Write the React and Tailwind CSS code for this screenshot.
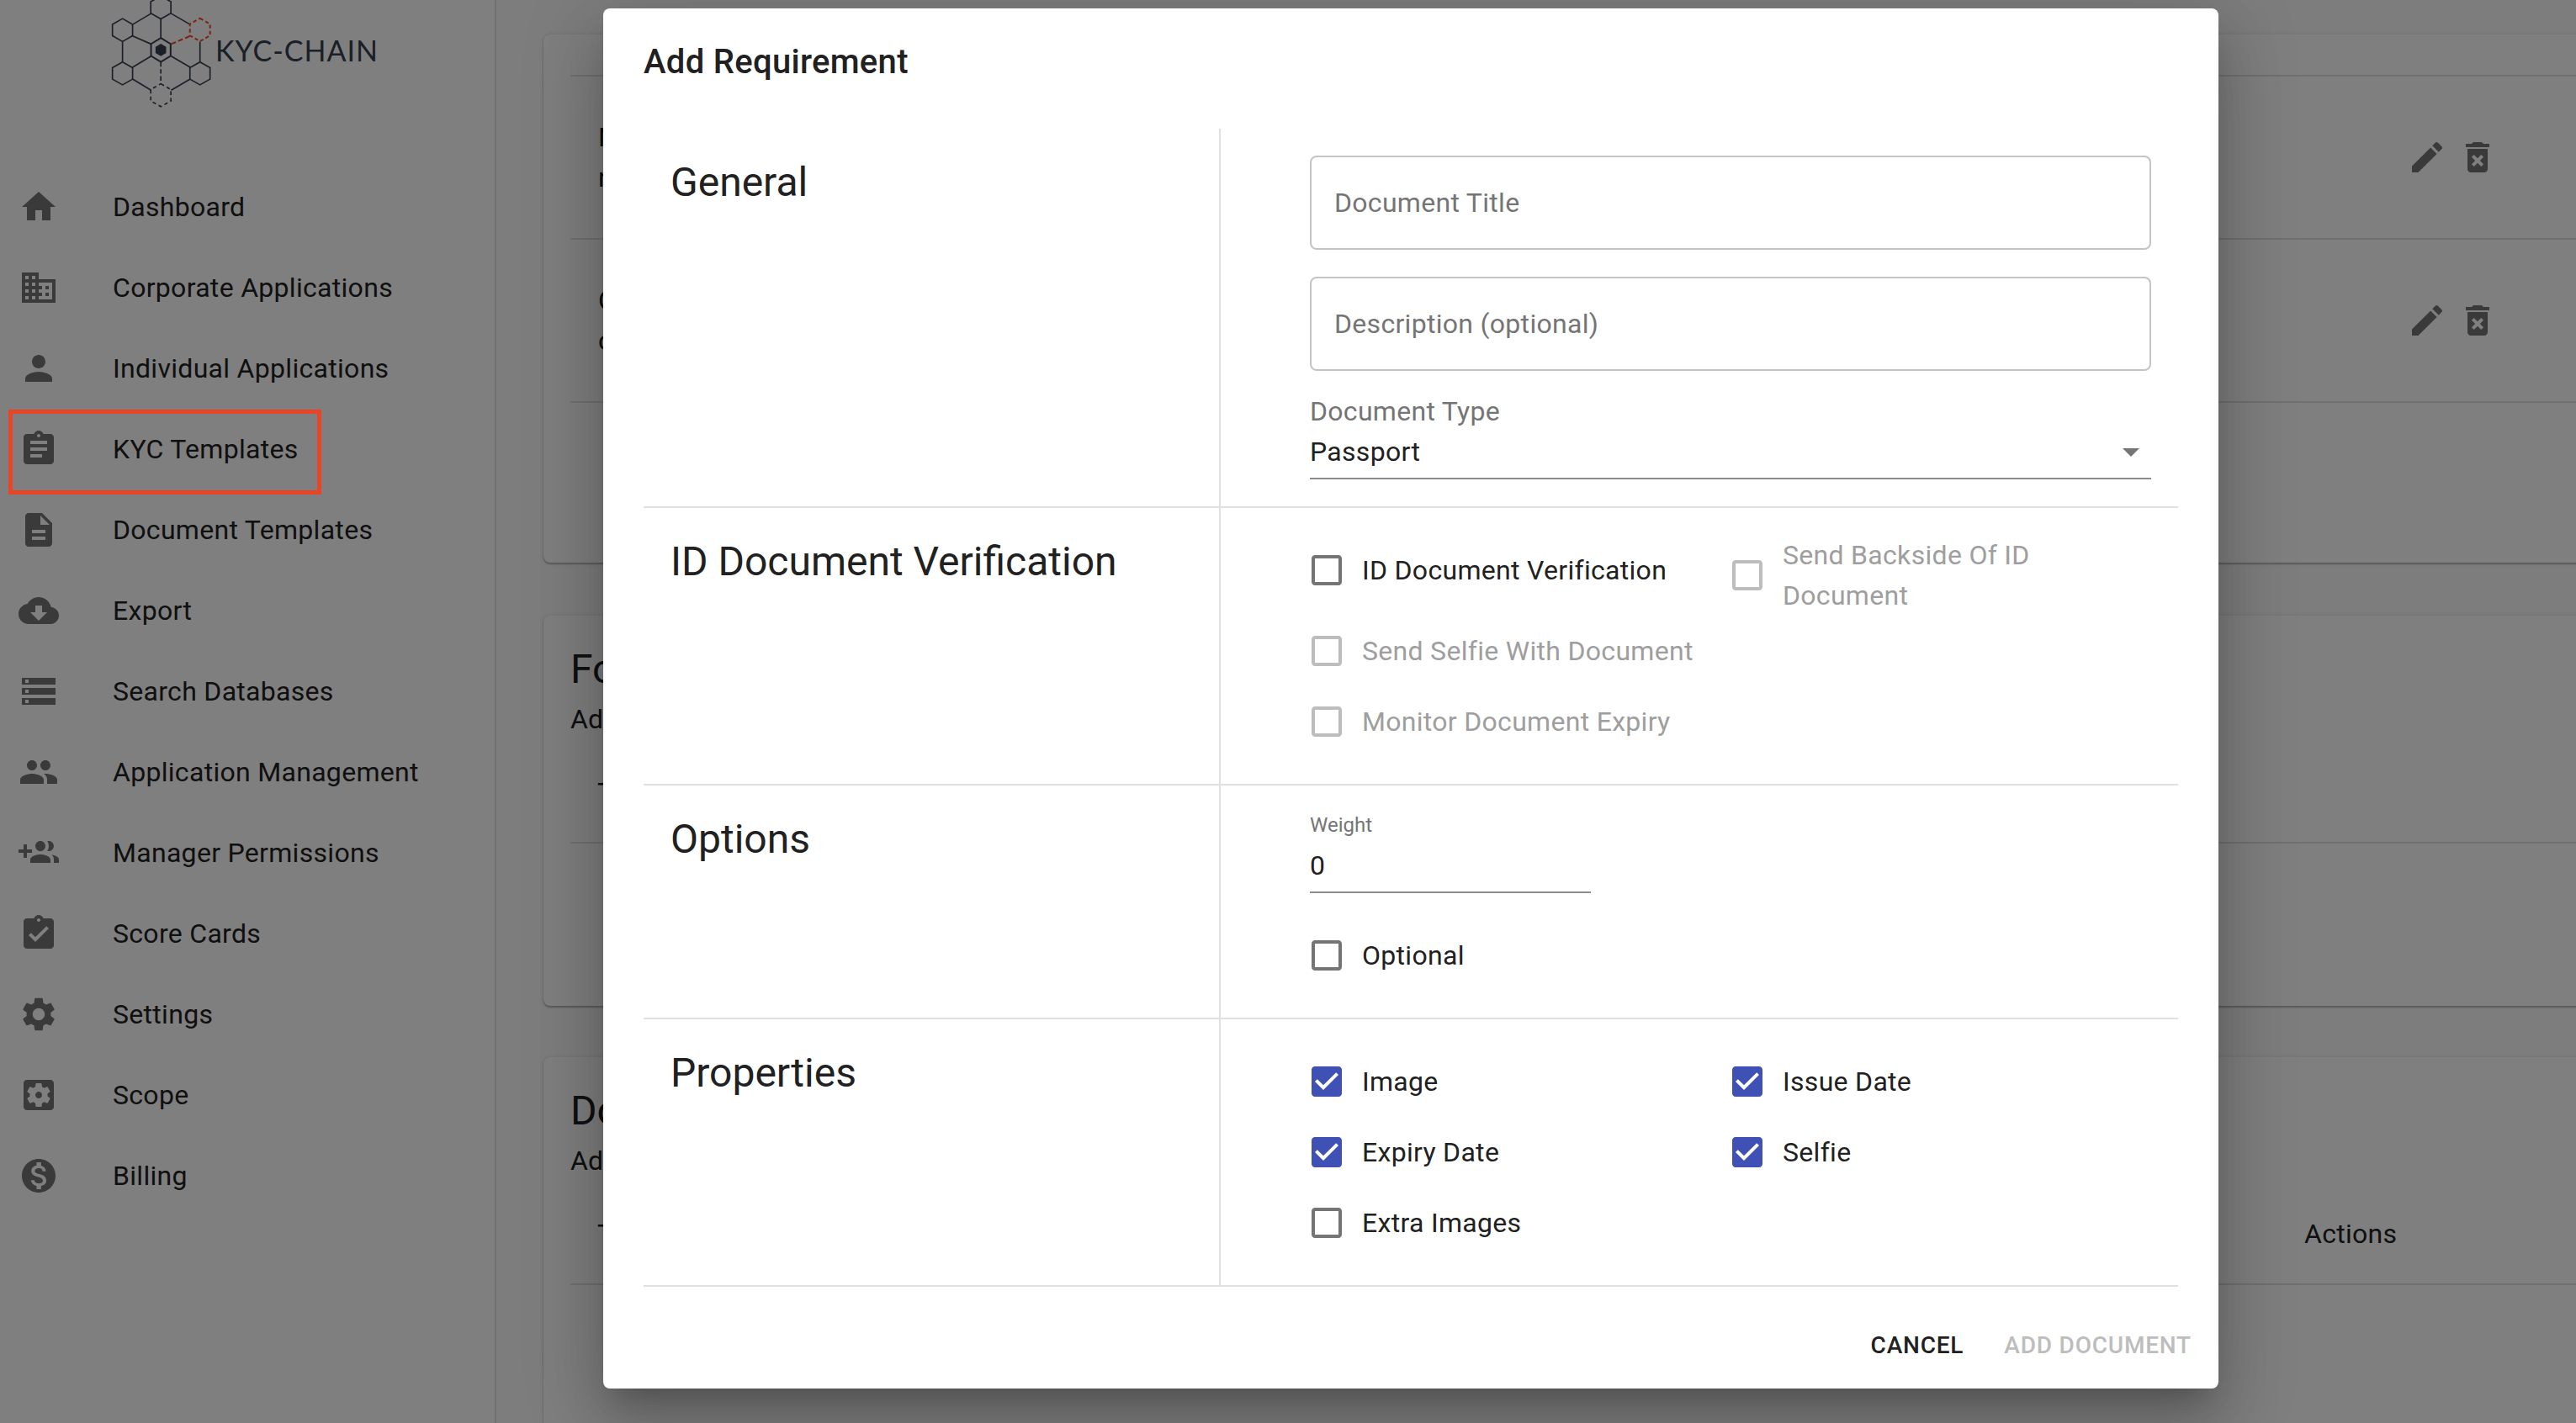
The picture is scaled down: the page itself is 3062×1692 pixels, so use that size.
import React from 'react'

const ICONS = {
  home: 'M10 20v-6h4v6h5v-8h3L12 3 2 12h3v8z',
  domain: 'M12 7V3H2v18h20V7H12zM6 19H4v-2h2v2zm0-4H4v-2h2v2zm0-4H4V9h2v2zm0-4H4V5h2v2zm4 12H8v-2h2v2zm0-4H8v-2h2v2zm0-4H8V9h2v2zm0-4H8V5h2v2zm10 12h-8v-2h2v-2h-2v-2h2v-2h-2V9h8v10zm-2-8h-2v2h2v-2zm0 4h-2v2h2v-2z',
  person: 'M12 12c2.21 0 4-1.79 4-4s-1.79-4-4-4-4 1.79-4 4 1.79 4 4 4zm0 2c-2.67 0-8 1.34-8 4v2h16v-2c0-2.66-5.33-4-8-4z',
  assignment: 'M19 3h-4.18C14.4 1.84 13.3 1 12 1c-1.3 0-2.4.84-2.82 2H5c-1.1 0-2 .9-2 2v14c0 1.1.9 2 2 2h14c1.1 0 2-.9 2-2V5c0-1.1-.9-2-2-2zm-7 0c.55 0 1 .45 1 1s-.45 1-1 1-1-.45-1-1 .45-1 1-1zm2 14H7v-2h7v2zm3-4H7v-2h10v2zm0-4H7V7h10v2z',
  description: 'M14 2H6c-1.1 0-1.99.9-1.99 2L4 20c0 1.1.89 2 1.99 2H18c1.1 0 2-.9 2-2V8l-6-6zm2 16H8v-2h8v2zm0-4H8v-2h8v2zm-3-5V3.5L18.5 9H13z',
  cloud: 'M19.35 10.04C18.67 6.59 15.64 4 12 4 9.11 4 6.6 5.64 5.35 8.04 2.34 8.36 0 10.91 0 14c0 3.31 2.69 6 6 6h13c2.76 0 5-2.24 5-5 0-2.64-2.05-4.78-4.65-4.96zM17 13l-5 5-5-5h3V9h4v4h3z',
  storage: 'M2 20h20v-4H2v4zm2-3h2v2H4v-2zM2 4v4h20V4H2zm4 3H4V5h2v2zm-4 7h20v-4H2v4zm2-3h2v2H4v-2z',
  people: 'M16 11c1.66 0 2.99-1.34 2.99-3S17.66 5 16 5c-1.66 0-3 1.34-3 3s1.34 3 3 3zm-8 0c1.66 0 2.99-1.34 2.99-3S9.66 5 8 5C6.34 5 5 6.34 5 8s1.34 3 3 3zm0 2c-2.33 0-7 1.17-7 3.5V19h14v-2.5c0-2.33-4.67-3.5-7-3.5zm8 0c-.29 0-.62.02-.97.05 1.16.84 1.97 1.97 1.97 3.45V19h6v-2.5c0-2.33-4.67-3.5-7-3.5z',
  groupAdd: 'M8 10H5V7H3v3H0v2h3v3h2v-3h3v-2zm10 1c1.66 0 2.99-1.34 2.99-3S19.66 5 18 5c-.32 0-.63.05-.91.14.57.81.9 1.79.9 2.86s-.34 2.04-.9 2.86c.28.09.59.14.91.14zm-5 0c1.66 0 2.99-1.34 2.99-3S14.66 5 13 5c-1.66 0-3 1.34-3 3s1.34 3 3 3zm6.62 2.16c.83.73 1.38 1.66 1.38 2.84v2h3v-2c0-1.54-2.37-2.49-4.38-2.84zM13 13c-2 0-6 1-6 3v2h12v-2c0-2-4-3-6-3z',
  turnedIn: 'M19 3h-4.18C14.4 1.84 13.3 1 12 1c-1.3 0-2.4.84-2.82 2H5c-1.1 0-2 .9-2 2v14c0 1.1.9 2 2 2h14c1.1 0 2-.9 2-2V5c0-1.1-.9-2-2-2zm-7 0c.55 0 1 .45 1 1s-.45 1-1 1-1-.45-1-1 .45-1 1-1zm-2 14l-4-4 1.41-1.41L10 14.17l6.59-6.59L18 9l-8 8z',
  settings: 'M19.14 12.94c.04-.3.06-.61.06-.94 0-.32-.02-.64-.07-.94l2.03-1.58c.18-.14.23-.41.12-.61l-1.92-3.32c-.12-.22-.37-.29-.59-.22l-2.39.96c-.5-.38-1.03-.7-1.62-.94l-.36-2.54c-.04-.24-.24-.41-.48-.41h-3.84c-.24 0-.43.17-.47.41l-.36 2.54c-.59.24-1.13.57-1.62.94l-2.39-.96c-.22-.08-.47 0-.59.22L2.74 8.87c-.12.21-.08.47.12.61l2.03 1.58c-.05.3-.09.63-.09.94s.02.64.07.94l-2.03 1.58c-.18.14-.23.41-.12.61l1.92 3.32c.12.22.37.29.59.22l2.39-.96c.5.38 1.03.7 1.62.94l.36 2.54c.05.24.24.41.48.41h3.84c.24 0 .44-.17.47-.41l.36-2.54c.59-.24 1.13-.56 1.62-.94l2.39.96c.22.08.47 0 .59-.22l1.92-3.32c.12-.22.07-.47-.12-.61l-2.01-1.58zM12 15.6c-1.98 0-3.6-1.62-3.6-3.6s1.62-3.6 3.6-3.6 3.6 1.62 3.6 3.6-1.62 3.6-3.6 3.6z',
  scope: 'M12 10c-1.1 0-2 .9-2 2s.9 2 2 2 2-.9 2-2-.9-2-2-2zm7-7H5c-1.11 0-2 .9-2 2v14c0 1.1.89 2 2 2h14c1.11 0 2-.9 2-2V5c0-1.1-.89-2-2-2zm-1.75 9c0 .23-.02.46-.05.68l1.48 1.16c.13.11.17.3.08.45l-1.4 2.42c-.09.15-.27.21-.43.15l-1.74-.7c-.36.28-.76.51-1.18.69l-.26 1.85c-.03.17-.18.3-.35.3h-2.8c-.17 0-.32-.13-.35-.29l-.26-1.85c-.43-.18-.82-.41-1.18-.69l-1.74.7c-.16.06-.34 0-.43-.15l-1.4-2.42c-.09-.15-.05-.34.08-.45l1.48-1.16c-.03-.23-.05-.46-.05-.69 0-.23.02-.46.05-.68l-1.48-1.16c-.13-.11-.17-.3-.08-.45l1.4-2.42c.09-.15.27-.21.43-.15l1.74.7c.36-.28.76-.51 1.18-.69l.26-1.85c.03-.17.18-.3.35-.3h2.8c.17 0 .32.13.35.29l.26 1.85c.43.18.82.41 1.18.69l1.74-.7c.16-.06.34 0 .43.15l1.4 2.42c.09.15.05.34-.08.45l-1.48 1.16c.03.23.05.46.05.69z',
  billing: 'M12 2C6.48 2 2 6.48 2 12s4.48 10 10 10 10-4.48 10-10S17.52 2 12 2zm1.41 16.09V20h-2.67v-1.93c-1.71-.36-3.16-1.46-3.27-3.4h1.96c.1 1.05.82 1.87 2.65 1.87 1.96 0 2.4-.98 2.4-1.59 0-.83-.44-1.61-2.67-2.14-2.48-.6-4.18-1.62-4.18-3.67 0-1.72 1.39-2.84 3.11-3.21V4h2.67v1.95c1.86.45 2.79 1.86 2.85 3.39H14.3c-.05-1.11-.64-1.87-2.22-1.87-1.5 0-2.4.68-2.4 1.64 0 .84.65 1.39 2.67 1.91s4.18 1.39 4.18 3.91c-.01 1.83-1.38 2.83-3.12 3.16z',
  edit: 'M3 17.25V21h3.75L17.81 9.94l-3.75-3.75L3 17.25zM20.71 7.04c.39-.39.39-1.02 0-1.41l-2.34-2.34c-.39-.39-1.02-.39-1.41 0l-1.83 1.83 3.75 3.75 1.83-1.83z',
  deleteForever: 'M6 19c0 1.1.9 2 2 2h8c1.1 0 2-.9 2-2V7H6v12zm2.46-7.12l1.41-1.41L12 12.59l2.12-2.12 1.41 1.41L13.41 14l2.12 2.12-1.41 1.41L12 15.41l-2.12 2.12-1.41-1.41L10.59 14l-2.13-2.12zM15.5 4l-1-1h-5l-1 1H5v2h14V4z',
  dropDown: 'M7 10l5 5 5-5z',
  checked: 'M19 3H5c-1.11 0-2 .9-2 2v14c0 1.1.89 2 2 2h14c1.11 0 2-.9 2-2V5c0-1.1-.89-2-2-2zm-9 14l-5-5 1.41-1.41L10 14.17l7.59-7.59L19 8l-9 9z',
  blank: 'M19 5v14H5V5h14m0-2H5c-1.1 0-2 .9-2 2v14c0 1.1.9 2 2 2h14c1.1 0 2-.9 2-2V5c0-1.1-.9-2-2-2z',
}

const NAV = [
  ['home', 'Dashboard'],
  ['domain', 'Corporate Applications'],
  ['person', 'Individual Applications'],
  ['assignment', 'KYC Templates'],
  ['description', 'Document Templates'],
  ['cloud', 'Export'],
  ['storage', 'Search Databases'],
  ['people', 'Application Management'],
  ['groupAdd', 'Manager Permissions'],
  ['turnedIn', 'Score Cards'],
  ['settings', 'Settings'],
  ['scope', 'Scope'],
  ['billing', 'Billing'],
]

function Icon({ name, className = '' }) {
  return (
    <svg viewBox="0 0 24 24" className={`w-[48px] h-[48px] shrink-0 fill-current ${className}`}>
      <path d={ICONS[name]} />
    </svg>
  )
}

function Hex({ cx, cy, rx = 36, ry = 41, ...props }) {
  const pts = [
    [cx, cy - ry], [cx + rx, cy - ry / 2], [cx + rx, cy + ry / 2],
    [cx, cy + ry], [cx - rx, cy + ry / 2], [cx - rx, cy - ry / 2],
  ].map(p => p.join(',')).join(' ')
  return <polygon points={pts} fill="none" {...props} />
}

function Logo() {
  const dark = '#363e4e'
  const red = '#f04a26'
  return (
    <svg viewBox="90 0 370 420" className="w-[123px] h-[140px] shrink-0">
      <g stroke={dark} strokeWidth="5" fill="none">
        <Hex cx={271} cy={26} />
        <Hex cx={134} cy={107} />
        <Hex cx={134} cy={262} />
        <Hex cx={411} cy={262} />
        <Hex cx={271} cy={178} rx={35} ry={43} strokeWidth="6" />
        <path d="M170 87L236 48M271 68V135M308 48L376 87M170 128L236 157M134 148V222M236 200L170 240M308 200L376 240M411 148V222M170 282L236 322M376 282L308 322" />
        <path d="M271 222V300" strokeDasharray="16 9" />
        <Hex cx={271} cy={340} strokeDasharray="13 11" />
      </g>
      <Hex cx={271} cy={178} rx={19} ry={22} style={{ fill: dark }} />
      <g stroke={red} strokeWidth="6" fill="none">
        <Hex cx={411} cy={106} strokeDasharray="13 9" />
        <path d="M308 157L376 128" strokeDasharray="18 9" />
      </g>
    </svg>
  )
}

function Sidebar() {
  return (
    <aside className="w-[590px] h-full shrink-0 bg-white border-r-2 border-[#e0e0e0]">
      <div className="flex items-start h-[198px] pl-[131px]">
        <Logo />
        <span className="mt-[38px] ml-[2px] text-[34px] leading-[44px] text-[#363e4e] tracking-[1px] font-['Lato',sans-serif]">KYC-CHAIN</span>
      </div>
      <nav>
        {NAV.map(([icon, label]) => (
          <div key={label} className="flex items-center h-[96px] pl-[22px]">
            <Icon name={icon} className="text-[#757575]" />
            <span className="ml-[64px] text-[32px] tracking-[0.3px] text-[#212121]">{label}</span>
          </div>
        ))}
      </nav>
    </aside>
  )
}

function TableRow({ lines }) {
  return (
    <div className="grid grid-cols-[2183px_1fr] items-center h-[194px] border-b-2 border-[#e0e0e0] text-[32px] leading-[48px] text-[#212121]">
      <div className="pl-[33px]">
        <div>{lines[0]}</div>
        <div>{lines[1]}</div>
      </div>
      <div className="flex gap-[12px] text-[#757575]">
        <Icon name="edit" />
        <Icon name="deleteForever" />
      </div>
    </div>
  )
}

function Card({ title, subtitle, actions, className = '' }) {
  return (
    <section className={`w-[2500px] bg-white rounded-[8px] pt-[32px] shadow-[0_2px_2px_rgba(0,0,0,0.25),0_0_4px_rgba(0,0,0,0.12)] ${className}`}>
      <div className="pl-[32px] text-[48px] leading-[64px] text-[#212121]">{title}</div>
      <div className="pl-[32px] mt-[3px] text-[32px] leading-[48px] text-[#212121]">{subtitle}</div>
      <div className="grid grid-cols-[2061px_1fr] items-center ml-[32px] h-[124px] pt-[4px] border-b-2 border-[#e0e0e0] text-[32px] tracking-[0.3px] text-[#212121]">
        <span className="pl-[32px]">Title</span>
        {actions && <span>Actions</span>}
      </div>
    </section>
  )
}

function Main() {
  return (
    <main className="flex-1 h-full overflow-hidden bg-[#fafafa] pl-[56px] pt-[41px]">
      <section className="w-[2500px] h-[628px] bg-white rounded-[8px] pt-[48px] shadow-[0_2px_2px_rgba(0,0,0,0.25),0_0_4px_rgba(0,0,0,0.12)]">
        <div className="ml-[32px] border-t-2 border-[#e0e0e0]">
          <TableRow lines={['Name', 'name']} />
          <TableRow lines={['Contact', 'contact']} />
        </div>
      </section>
      <Card title="Forms" subtitle="Add forms" className="h-[464px] mt-[63px]" />
      <Card title="Documents" subtitle="Add documents" actions className="h-[500px] mt-[61px]" />
    </main>
  )
}

function Check({ label, checked, disabled }) {
  const box = checked ? 'text-[#3f51b5]' : disabled ? 'text-[#bdbdbd]' : 'text-[#757575]'
  return (
    <div className="flex items-center min-h-[84px] ml-[-22px]">
      <div className="w-[84px] flex justify-center shrink-0">
        <Icon name={checked ? 'checked' : 'blank'} className={box} />
      </div>
      <span className={`mr-[32px] text-[32px] leading-[48px] tracking-[0.3px] ${disabled ? 'text-[#9e9e9e]' : 'text-[#212121]'}`}>{label}</span>
    </div>
  )
}

function Section({ title, children }) {
  return (
    <div className="grid grid-cols-[684px_1140px] border-b-2 border-[#e0e0e0]">
      <h2 className="pl-[32px] pt-[32px] text-[48px] leading-[64px] font-normal text-[#212121]">{title}</h2>
      <div className="border-l-2 border-[#e0e0e0] pl-[106px] py-[32px]">{children}</div>
    </div>
  )
}

function Outlined({ children, className = '' }) {
  return (
    <div className={`flex items-center w-[1000px] h-[112px] px-[27px] border-2 border-[#c4c4c4] rounded-[8px] text-[32px] tracking-[0.3px] text-[#757575] ${className}`}>
      {children}
    </div>
  )
}

function Modal() {
  return (
    <div className="w-[1920px] h-[1641px] ml-[717px] mt-[10px] flex flex-col bg-white rounded-[8px] shadow-[0_22px_30px_-14px_rgba(0,0,0,0.2),0_48px_76px_6px_rgba(0,0,0,0.14),0_18px_92px_16px_rgba(0,0,0,0.12)]">
      <div className="h-[143px] pl-[48px] pt-[41px] text-[40px] leading-[46px] font-medium tracking-[0.3px] text-[#212121]">Add Requirement</div>
      <div className="mx-[48px]">
        <Section title="General">
          <Outlined>Document Title</Outlined>
          <Outlined className="mt-[32px]">Description (optional)</Outlined>
          <div className="w-[1000px] mt-[32px] border-b-2 border-[#8c8c8c]">
            <div className="text-[32px] leading-[32px] tracking-[0.3px] text-[#757575]">Document Type</div>
            <div className="flex items-center justify-between h-[63px] text-[32px] tracking-[0.3px] text-[#212121]">
              Passport
              <Icon name="dropDown" className="text-[#757575]" />
            </div>
          </div>
        </Section>
        <Section title="ID Document Verification">
          <div className="grid grid-cols-[500px_500px] items-start">
            <Check label="ID Document Verification" />
            <Check label="Send Backside Of ID Document" disabled />
            <Check label="Send Selfie With Document" disabled />
            <div />
            <Check label="Monitor Document Expiry" disabled />
          </div>
        </Section>
        <Section title="Options">
          <div className="w-[334px] h-[96px] pt-[2px] border-b-2 border-[#8c8c8c]">
            <div className="text-[24px] leading-[26px] text-[#757575]">Weight</div>
            <div className="mt-[16px] text-[32px] leading-[38px] tracking-[0.3px] text-[#212121]">0</div>
          </div>
          <div className="mt-[32px]">
            <Check label="Optional" />
          </div>
        </Section>
        <Section title="Properties">
          <div className="grid grid-cols-[500px_500px]">
            <Check label="Image" checked />
            <Check label="Issue Date" checked />
            <Check label="Expiry Date" checked />
            <Check label="Selfie" checked />
            <Check label="Extra Images" />
          </div>
        </Section>
      </div>
      <div className="flex-1 flex items-end justify-end gap-[16px] pr-[16px] pb-[15px]">
        <button className="h-[72px] px-[16px] text-[28px] font-medium tracking-[0.8px] text-[#212121]">CANCEL</button>
        <button className="h-[72px] px-[16px] text-[28px] font-medium tracking-[0.8px] text-[#bdbdbd]">ADD DOCUMENT</button>
      </div>
    </div>
  )
}

export default function App() {
  return (
    <div className="relative w-[3062px] h-[1692px] overflow-hidden flex font-['Roboto',sans-serif]">
      <Sidebar />
      <Main />
      <div className="absolute inset-0 bg-black/50">
        <Modal />
      </div>
      <div className="absolute left-[10px] top-[487px] w-[372px] h-[101px] border-[5px] border-[#ea4427]" />
    </div>
  )
}
